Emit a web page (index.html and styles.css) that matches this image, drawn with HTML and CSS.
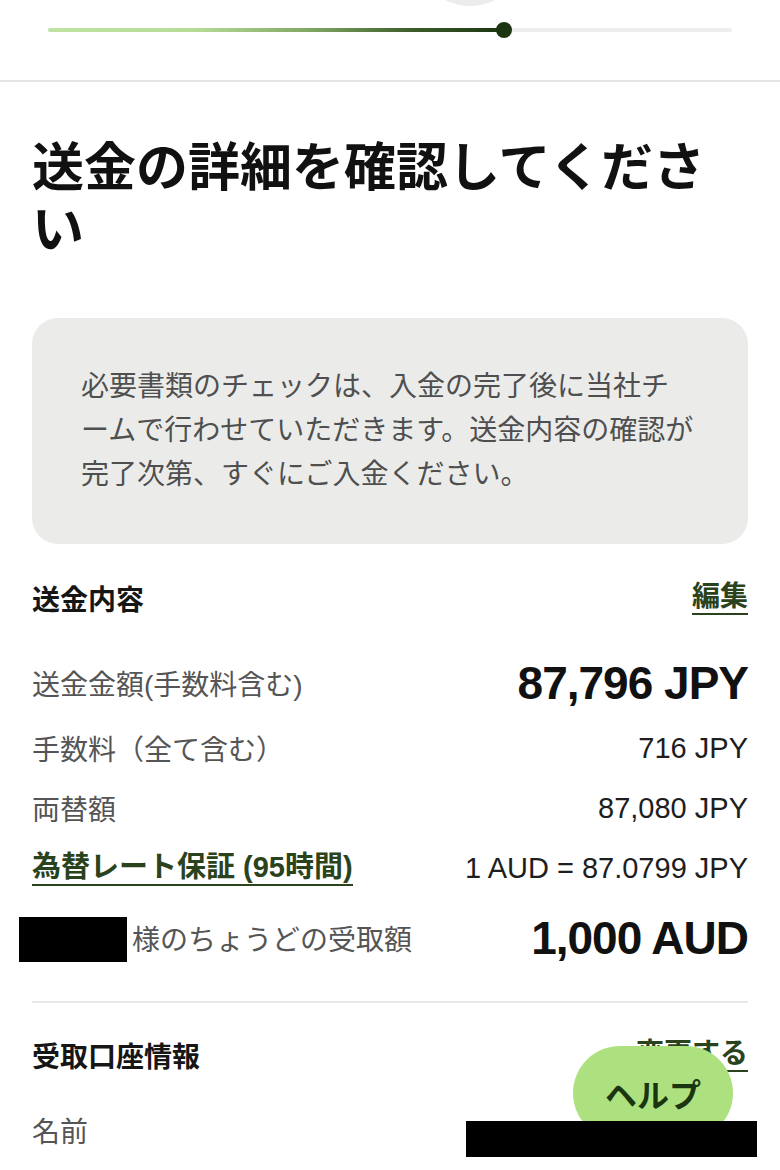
FILE: index.html
```html
<!DOCTYPE html>
<html lang="ja">
<head>
    <meta charset="UTF-8">
    <meta name="viewport" content="width=device-width, initial-scale=1.0">
    <title>送金の詳細を確認</title>
    <link rel="stylesheet" href="styles.css">
</head>
<body>
    <div class="topbar">
        <div class="step-circle"></div>
        <div class="progress">
            <div class="progress-fill"></div>
            <div class="progress-thumb"></div>
        </div>
    </div>

    <div class="content">
        <h1 class="title">送金の詳細を確認してください</h1>

        <div class="notice">
            <p>必要書類のチェックは、入金の完了後に当社チ<br>ームで行わせていただきます。送金内容の確認が完了次第、すぐにご入金ください。</p>
        </div>

        <div class="section-head">
            <h2>送金内容</h2>
            <a href="#" class="link">編集</a>
        </div>

        <div class="rows">
            <div class="row row-big">
                <span class="label">送金金額(手数料含む)</span>
                <span class="value value-big">87,796 JPY</span>
            </div>
            <div class="row">
                <span class="label">手数料（全て含む）</span>
                <span class="value">716 JPY</span>
            </div>
            <div class="row">
                <span class="label">両替額</span>
                <span class="value">87,080 JPY</span>
            </div>
            <div class="row">
                <a href="#" class="link rate-link">為替レート保証 (95時間)</a>
                <span class="value">1 AUD = 87.0799 JPY</span>
            </div>
            <div class="row row-receive">
                <span class="label"><span class="redact redact-name"></span>様のちょうどの受取額</span>
                <span class="value value-big">1,000 AUD</span>
            </div>
        </div>

        <hr class="divider">

        <div class="section-head section-account">
            <h2>受取口座情報</h2>
            <a href="#" class="link">変更する</a>
        </div>

        <div class="row row-name">
            <span class="label">名前</span>
            <span class="redact redact-account"></span>
        </div>
    </div>

    <a href="#" class="help-btn">ヘルプ</a>
</body>
</html>
```

FILE: styles.css
```css
body {
    margin: 0;
    padding: 0;
    background-color: #FFFFFF;
    color: #161616;
    font-family: "Liberation Sans", "Noto Sans CJK JP", sans-serif;
}
.topbar {
    height: 80px;
    padding: 0 48px;
    border-bottom: 2px solid #E4E4E4;
    overflow: hidden;
}
.step-circle {
    width: 110px;
    height: 110px;
    margin: -104px 0 0 367px;
    border-radius: 50%;
    background-color: #ECECEC;
}
.progress {
    position: relative;
    height: 4px;
    margin-top: 22px;
    border-radius: 2px;
    background-color: #EEEEEE;
}
.progress-fill {
    width: 66.7%;
    height: 100%;
    border-radius: 2px;
    background: linear-gradient(90deg, #BFE3A0 0%, #B6DC96 32%, #7FA562 58%, #3C5C2A 80%, #1B3510 100%);
}
.progress-thumb {
    position: absolute;
    top: -6px;
    left: calc(66.7% - 8px);
    width: 16px;
    height: 16px;
    border-radius: 50%;
    background-color: #1B3510;
}
.content {
    padding: 0 32px;
}
.title {
    margin: 55px 0 0;
    font-size: 52px;
    line-height: 62px;
    font-weight: 700;
    color: #111111;
}
.notice {
    margin-top: 57px;
    padding: 47px 48px 47px 49px;
    border-radius: 26px;
    background-color: #EBECEA;
}
.notice p {
    margin: 0;
    font-size: 28px;
    line-height: 44px;
    color: #4F4F4F;
}
.section-head {
    display: flex;
    justify-content: space-between;
    align-items: center;
    height: 40px;
    margin-top: 34px;
}
.section-head h2 {
    margin: 0;
    font-size: 28px;
    font-weight: 700;
    color: #161616;
}
.link {
    font-size: 28px;
    line-height: 32px;
    font-weight: 700;
    color: #2A431C;
    text-decoration: none;
    border-bottom: 2px solid #2A431C;
}
.rows {
    margin-top: 30px;
}
.row {
    display: flex;
    justify-content: space-between;
    align-items: center;
    height: 60px;
}
.row-big {
    height: 70px;
}
.row-receive {
    height: 80px;
}
.label {
    display: flex;
    align-items: center;
    font-size: 28px;
    color: #555555;
}
.value {
    font-size: 29px;
    color: #1E1E1E;
}
.value-big {
    font-size: 46px;
    font-weight: 700;
    letter-spacing: -1px;
    color: #111111;
}
.rate-link {
    font-size: 29px;
    line-height: 34px;
}
.redact {
    display: inline-block;
    background-color: #000000;
}
.redact-name {
    width: 108px;
    height: 45px;
    margin: 2px 5px 0 -13px;
}
.divider {
    height: 2px;
    margin: 23px 0 0;
    border: none;
    background-color: #E8E8E8;
}
.section-account {
    margin-top: 32px;
}
.row-name {
    margin-top: 25px;
    align-items: flex-start;
}
.row-name .label {
    height: 60px;
}
.redact-account {
    position: relative;
    z-index: 6;
    width: 291px;
    height: 36px;
    margin: 21px -9px 0 0;
}
.help-btn {
    position: fixed;
    right: 47px;
    bottom: 30px;
    z-index: 5;
    display: flex;
    align-items: center;
    justify-content: center;
    width: 160px;
    height: 94px;
    border-radius: 47px;
    background-color: #ADE17F;
    color: #1B3510;
    font-size: 32px;
    font-weight: 700;
    text-decoration: none;
}
```
